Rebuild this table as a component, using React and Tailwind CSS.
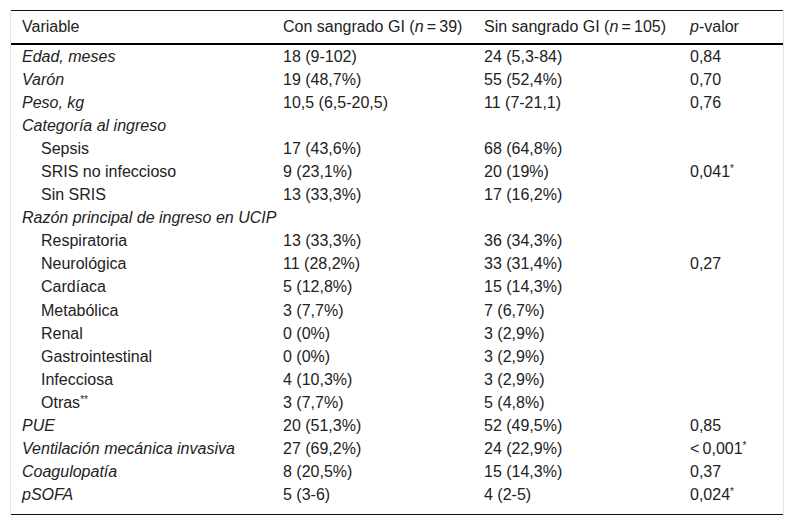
import React from 'react';

const rows = [
    { label: 'Edad, meses', italic: true, a: '18 (9-102)', b: '24 (5,3-84)', p: '0,84' },
    { label: 'Varón', italic: true, a: '19 (48,7%)', b: '55 (52,4%)', p: '0,70' },
    { label: 'Peso, kg', italic: true, a: '10,5 (6,5-20,5)', b: '11 (7-21,1)', p: '0,76' },
    { label: 'Categoría al ingreso', italic: true },
    { label: 'Sepsis', indent: true, a: '17 (43,6%)', b: '68 (64,8%)' },
    { label: 'SRIS no infeccioso', indent: true, a: '9 (23,1%)', b: '20 (19%)', p: '0,041', star: true },
    { label: 'Sin SRIS', indent: true, a: '13 (33,3%)', b: '17 (16,2%)' },
    { label: 'Razón principal de ingreso en UCIP', italic: true },
    { label: 'Respiratoria', indent: true, a: '13 (33,3%)', b: '36 (34,3%)' },
    { label: 'Neurológica', indent: true, a: '11 (28,2%)', b: '33 (31,4%)', p: '0,27' },
    { label: 'Cardíaca', indent: true, a: '5 (12,8%)', b: '15 (14,3%)' },
    { label: 'Metabólica', indent: true, a: '3 (7,7%)', b: '7 (6,7%)' },
    { label: 'Renal', indent: true, a: '0 (0%)', b: '3 (2,9%)' },
    { label: 'Gastrointestinal', indent: true, a: '0 (0%)', b: '3 (2,9%)' },
    { label: 'Infecciosa', indent: true, a: '4 (10,3%)', b: '3 (2,9%)' },
    { label: 'Otras', indent: true, sup: '**', a: '3 (7,7%)', b: '5 (4,8%)' },
    { label: 'PUE', italic: true, a: '20 (51,3%)', b: '52 (49,5%)', p: '0,85' },
    { label: 'Ventilación mecánica invasiva', italic: true, a: '27 (69,2%)', b: '24 (22,9%)', p: '<\u20090,001', star: true },
    { label: 'Coagulopatía', italic: true, a: '8 (20,5%)', b: '15 (14,3%)', p: '0,37' },
    { label: 'pSOFA', italic: true, a: '5 (3-6)', b: '4 (2-5)', p: '0,024', star: true },
];

const grid = 'grid grid-cols-[261px_201px_206px_1fr]';

export default function App() {
    return (
        <div className="bg-white w-[794px] h-[524px] pt-[10px] pl-[10px] font-['Liberation_Sans',Arial,sans-serif] text-[16px] text-[#222]">
            <div className="w-[774px] border-x border-[#e4e4e4]">
                <div className={`${grid} border-t border-[#111] border-b-2 border-b-black h-[35px] items-center`}>
                    <div className="pl-[11px]">Variable</div>
                    <div className="pl-[11px]">Con sangrado GI (<i>n</i>{'\u2009=\u2009'}39)</div>
                    <div className="pl-[11px]">Sin sangrado GI (<i>n</i>{'\u2009=\u2009'}105)</div>
                    <div className="pl-[11px]"><i>p</i>-valor</div>
                </div>
                <div className="pb-[7px] border-b border-[#111]">
                    {rows.map((r, i) => (
                        <div key={i} className={`${grid} h-[23.1px] items-center leading-none`}>
                            <div className={`${r.indent ? 'pl-[30px]' : 'pl-[11px]'} ${r.italic ? 'italic' : ''} whitespace-nowrap`}>
                                {r.label}
                                {r.sup && <sup className="text-[10px]">{r.sup}</sup>}
                            </div>
                            <div className="pl-[11px]">{r.a}</div>
                            <div className="pl-[11px]">{r.b}</div>
                            <div className="pl-[11px]">
                                {r.p}
                                {r.star && <sup className="text-[10px]">*</sup>}
                            </div>
                        </div>
                    ))}
                </div>
            </div>
        </div>
    );
}
